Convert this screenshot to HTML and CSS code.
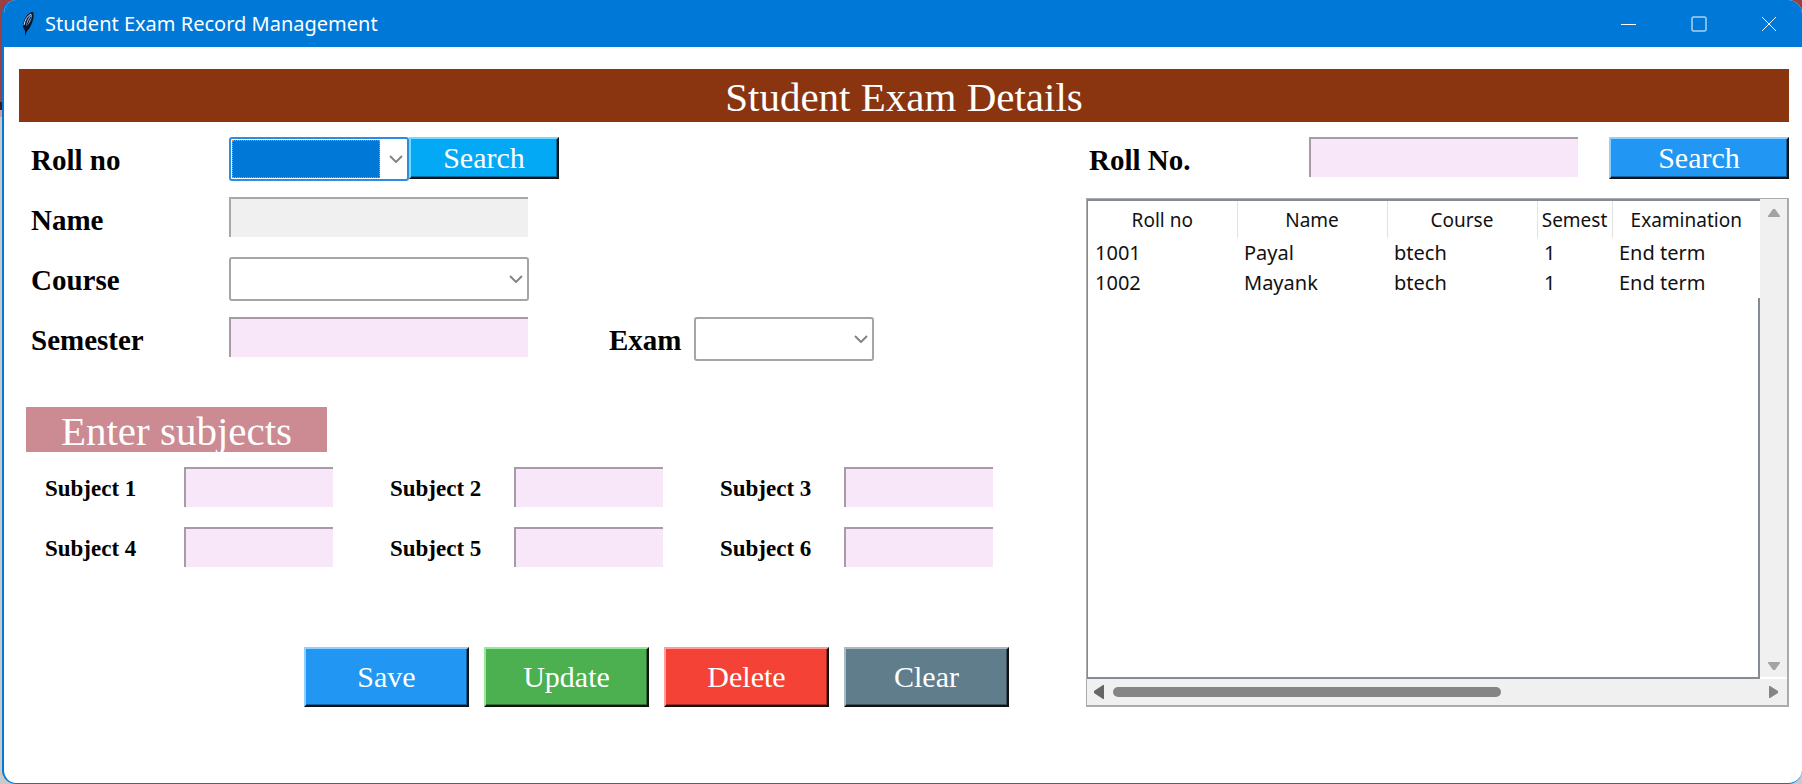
FILE: index.html
```
<!DOCTYPE html>
<html lang="en">
<head>
<meta charset="utf-8">
<title>Student Exam Record Management</title>
<link rel="stylesheet" href="styles.css">
</head>
<body>
<div class="window">
  <header class="titlebar">
    <svg class="feather" viewBox="0 0 14 26" aria-hidden="true">
      <path d="M12 1C7 1 2 8 2 16l2 4v5l2-5 2-2c3-5 6-12 4-17z" fill="#0b1526"/>
      <path d="M11 3C8 5 5 10 5 16c3-3 6-7 6-13z" fill="#6f9bd8"/>
      <path d="M10 6C7 11 5 15 5 21" fill="none" stroke="#0b1526"/>
      <path d="M10 3C6 5 4 9 3 14" fill="none" stroke="#d5e4f7"/>
    </svg>
    <span class="caption">Student Exam Record Management</span>
    <div class="controls">
      <button class="control" aria-label="Minimize"><svg viewBox="0 0 16 16"><path d="M0 8.500h15"/></svg></button>
      <button class="control" aria-label="Maximize"><svg viewBox="0 0 16 16"><rect x="1" y="1" width="14" height="14" rx="1"/></svg></button>
      <button class="control" aria-label="Close"><svg viewBox="0 0 16 16"><path d="M1 1l14 14M15 1L1 15"/></svg></button>
    </div>
  </header>
  <main class="content">
    <h1 class="banner">Student Exam Details</h1>
    <div class="panels">
      <form class="entry">
        <div class="fields">
          <label for="roll">Roll no</label>
          <div class="inline">
            <div class="combo combo-small combo-active">
              <select id="roll"></select>
              <span class="selection"></span>
              <svg class="chevron" viewBox="0 0 14 8"><path d="M1 1l6 6 6-6"/></svg>
            </div>
            <button type="button" class="btn btn-sky btn-find">Search</button>
          </div>
          <label for="name">Name</label>
          <input id="name" class="box box-wide" type="text" disabled>
          <label for="course">Course</label>
          <div class="combo combo-wide">
            <select id="course"></select>
            <svg class="chevron" viewBox="0 0 14 8"><path d="M1 1l6 6 6-6"/></svg>
          </div>
          <label for="semester">Semester</label>
          <div class="inline">
            <input id="semester" class="box box-wide" type="text">
            <label class="exam" for="exam">Exam</label>
            <div class="combo combo-small">
              <select id="exam"></select>
              <svg class="chevron" viewBox="0 0 14 8"><path d="M1 1l6 6 6-6"/></svg>
            </div>
          </div>
        </div>
        <h2 class="section">Enter subjects</h2>
        <div class="subjects">
          <label for="s1">Subject 1</label><input id="s1" class="box" type="text">
          <label for="s2">Subject 2</label><input id="s2" class="box" type="text">
          <label for="s3">Subject 3</label><input id="s3" class="box" type="text">
          <label for="s4">Subject 4</label><input id="s4" class="box" type="text">
          <label for="s5">Subject 5</label><input id="s5" class="box" type="text">
          <label for="s6">Subject 6</label><input id="s6" class="box" type="text">
        </div>
        <div class="actions">
          <button type="button" class="btn btn-blue">Save</button>
          <button type="button" class="btn btn-green">Update</button>
          <button type="button" class="btn btn-red">Delete</button>
          <button type="button" class="btn btn-slate">Clear</button>
        </div>
      </form>
      <section class="records">
        <form class="lookup">
          <label for="find">Roll No.</label>
          <input id="find" class="box" type="text">
          <button type="button" class="btn btn-blue btn-lookup">Search</button>
        </form>
        <div class="frame">
          <div class="tree">
            <table>
              <colgroup><col class="col-first"><col class="col"><col class="col"><col class="col-half"><col></colgroup>
              <thead><tr><th>Roll no</th><th>Name</th><th>Course</th><th>Semest</th><th>Examination</th></tr></thead>
              <tbody>
                <tr><td>1001</td><td>Payal</td><td>btech</td><td>1</td><td>End term</td></tr>
                <tr><td>1002</td><td>Mayank</td><td>btech</td><td>1</td><td>End term</td></tr>
              </tbody>
            </table>
          </div>
          <div class="vbar">
            <svg viewBox="0 0 14 10"><path d="M6 1h2l5 7v1H1V8z"/></svg>
            <svg viewBox="0 0 14 10"><path d="M6 9h2l5-7V1H1v1z"/></svg>
          </div>
          <div class="hbar">
            <svg class="arrow-left" viewBox="0 0 12 16"><path d="M10 1h1v14h-1L1 9V7z"/></svg>
            <div class="track"><div class="thumb"></div></div>
            <svg class="arrow-right" viewBox="0 0 12 16"><path d="M1 2h1l8 5v2l-8 5H1z"/></svg>
          </div>
        </div>
      </section>
    </div>
  </main>
</div>
</body>
</html>
```
FILE: styles.css
```
* { box-sizing: border-box; }

html {
  background: linear-gradient(#9c3f45 0 102px, #3a1a22 102px 110px, #d59a9c 110px 117px, #c9c9c9 117px);
}

body {
  margin: 0;
  color: #000;
  font-family: "Goudy Old Style", "Liberation Serif", serif;
  font-size: 30px;
}

.window {
  display: flex;
  flex-direction: column;
  min-height: 100vh;
  margin-left: 2px;
  background: #fff;
  border-left: 2px solid #0078d7;
  border-bottom: 1px solid #0078d7;
  border-radius: 14px;
  overflow: hidden;
}

.titlebar {
  display: flex;
  align-items: center;
  height: 47px;
  padding-left: 17px;
  background: #0078d7;
  color: #fff;
  font: 20px "Segoe UI", "Noto Sans", sans-serif;
}

.feather { width: 14px; height: 26px; margin-right: 10px; }
.caption { flex: 1; }
.controls { display: flex; margin-right: -2px; }

.control {
  display: grid;
  place-items: center;
  width: 70px;
  height: 47px;
  padding: 0;
  border: 0;
  background: none;
}

.control svg {
  width: 16px;
  height: 16px;
  fill: none;
  stroke: #fff;
}

.content { flex: 1; padding: 22px 13px 0 15px; }

.banner {
  height: 53px;
  margin: 0 0 15px;
  background: #8b3510;
  color: #fff;
  font-size: 41px;
  font-weight: 400;
  line-height: 56px;
  text-align: center;
}

.panels {
  display: grid;
  grid-template-columns: 1067px 1fr;
}

label { font-weight: 700; font-size: 29px; }

.fields {
  display: grid;
  grid-template-columns: 198px 1fr;
  grid-auto-rows: 60px;
  align-items: start;
  padding-left: 12px;
}

.fields label, .lookup label { line-height: 46px; }

.inline { display: flex; align-items: flex-start; }

.box {
  width: 149px;
  height: 40px;
  padding: 0 4px;
  border: 0 solid #a79ba8;
  border-width: 2px 0 0 2px;
  border-radius: 0;
  background: #f8e6f9;
  font: inherit;
}

.box:disabled { background: #f0f0f0; border-color: #a8a8a8; }
.box-wide { width: 299px; }

.combo { position: relative; height: 44px; }
.combo-small { width: 180px; }
.combo-wide { width: 300px; }

.combo select {
  display: block;
  width: 100%;
  height: 100%;
  appearance: none;
  border: 2px solid #a5a5a5;
  border-radius: 3px;
  background: #fff;
  font: inherit;
}

.combo-active select { border-color: #2f8bdf; }

.selection {
  position: absolute;
  inset: 3px 29px 3px 3px;
  border: 1px dotted #ff8728;
  background: #0078d7;
  pointer-events: none;
}

.chevron {
  position: absolute;
  top: 18px;
  right: 6px;
  width: 14px;
  height: 8px;
  fill: none;
  stroke: #858585;
  stroke-width: 2;
  pointer-events: none;
}

.exam { width: 85px; margin-left: 81px; }

.btn {
  padding: 0;
  border: 2px solid;
  font: 30px "Goudy Old Style", "Liberation Serif", serif;
  color: #fff;
  box-shadow: inset -1px -1px rgb(0 0 0 / 35%);
}

.btn-find { width: 150px; height: 42px; }
.btn-sky { background: #03a9f4; border-color: #6fdcff #111 #111 #6fdcff; }
.btn-blue { background: #2196f3; border-color: #90d0ff #111 #111 #90d0ff; }
.btn-green { background: #4caf50; border-color: #96e89a #111 #111 #96e89a; }
.btn-red { background: #f44336; border-color: #ff9e98 #111 #111 #ff9e98; }
.btn-slate { background: #607d8b; border-color: #a9bac2 #111 #111 #a9bac2; }

.section {
  width: 301px;
  height: 45px;
  margin: 30px 0 15px 7px;
  background: #cc8a93;
  color: #fff;
  font-size: 41px;
  font-weight: 400;
  line-height: 48px;
  text-align: center;
}

.subjects {
  display: grid;
  grid-template-columns: 139px 206px 124px 206px 124px 150px;
  grid-auto-rows: 60px;
  align-items: start;
  padding-left: 26px;
}

.subjects label { font-size: 23px; line-height: 43px; }

.actions {
  display: grid;
  grid-template-columns: repeat(4, 165px);
  grid-auto-rows: 60px;
  gap: 15px;
  margin: 60px 0 0 285px;
}

.lookup {
  display: flex;
  align-items: flex-start;
  height: 61px;
  padding-left: 3px;
}

.lookup label { width: 220px; }
.lookup .box { flex: 1; margin-right: 31px; }
.btn-lookup { width: 180px; height: 42px; }

.frame {
  display: grid;
  grid-template: 1fr 26px / 1fr 27px;
  height: 509px;
  border: 1px solid #ababab;
  border-right-width: 2px;
  border-bottom-width: 2px;
  background: #f0f0f0;
}

.tree { border: 2px solid #858b92; border-left-width: 1px; background: #fff; }

table {
  width: calc(100% + 2px);
  table-layout: fixed;
  border-collapse: collapse;
  background: #fff;
  color: #111;
  font: 20px "Segoe UI", "Noto Sans", sans-serif;
}

.col-first { width: 149px; }
.col { width: 150px; }
.col-half { width: 75px; }

th {
  height: 37px;
  padding: 0 4px;
  overflow: hidden;
  border-right: 1px solid #e2e2e2;
  font-size: 19px;
  font-weight: 400;
  white-space: nowrap;
}

th:last-child { border-right: 0; }
td { height: 30px; padding: 0 7px; line-height: 28px; }

.vbar {
  display: flex;
  flex-direction: column;
  justify-content: space-between;
  align-items: center;
  padding: 8px 0 5px;
  border-bottom: 2px solid #fff;
}

.vbar svg { width: 14px; height: 12px; fill: #a3a3a3; }

.hbar {
  grid-column: 1 / -1;
  display: flex;
  align-items: center;
  padding: 0 7px 0 6px;
}

.hbar svg { width: 12px; height: 18px; fill: #858585; }
.hbar .arrow-left { fill: #666; }
.track { flex: 1; padding: 0 8px; }

.thumb {
  width: 60%;
  height: 10px;
  border-radius: 5px;
  background: #858585;
}
```
